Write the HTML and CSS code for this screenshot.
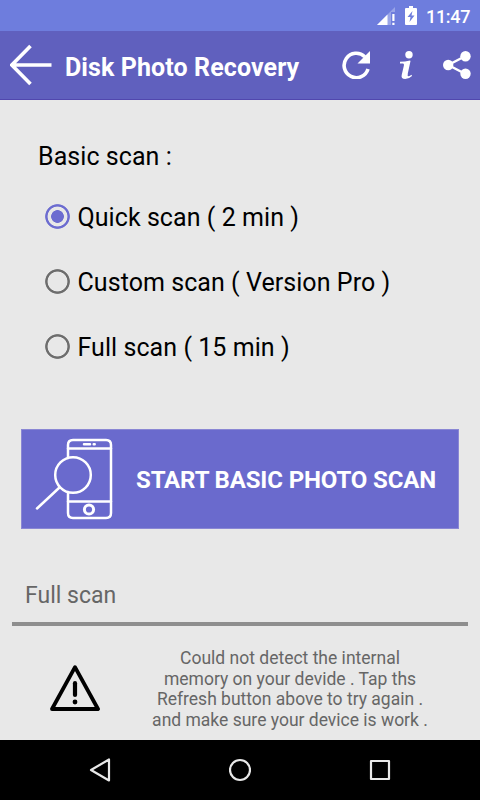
FILE: index.html
```
<!DOCTYPE html>
<html lang="en">
<head>
  <meta charset="UTF-8">
  <meta name="viewport" content="width=device-width, initial-scale=1.0">
  <title>Disk Photo Recovery</title>
  <link rel="stylesheet" href="styles.css">
</head>
<body>
  <div class="status-bar">
    <svg class="signal" width="18" height="18" viewBox="0 0 18 18">
      <path d="M0 18L18 0V5H14V18Z" fill="#fff" opacity=".3"/>
      <path d="M0 18L10.5 7.5V18Z" fill="#fff"/>
      <path d="M15.3 7H17.5V14H15.3ZM15.3 15.7H17.5V18H15.3Z" fill="#fff"/>
    </svg>
    <svg class="battery" width="12" height="19" viewBox="0 0 12 19">
      <path d="M4 0H8V2H11Q12 2 12 3V18Q12 19 11 19H1Q0 19 0 18V3Q0 2 1 2H4Z" fill="#fff"/>
      <path d="M7.5 5L2.5 11H5.5L4.5 16L9.5 9.5H6.5Z" fill="#6e7ddd"/>
    </svg>
    <span class="clock">11:47</span>
  </div>

  <header>
    <svg class="back" width="42" height="42" viewBox="0 0 42 42" fill="none" stroke="#fff" stroke-width="3.6">
      <path d="M41.5 21H2M20.5 2L1.8 21L20.5 40"/>
    </svg>
    <h1>Disk Photo Recovery</h1>
    <svg class="refresh" width="28" height="28" viewBox="0 0 28 28">
      <path d="M26 18A12.2 12.2 0 1 1 22.8 5.7" fill="none" stroke="#fff" stroke-width="3.6"/>
      <path d="M28 0V12.5H15.5Z" fill="#fff"/>
    </svg>
    <svg class="info" width="13" height="28" viewBox="0 0 13 28" fill="#fff">
      <circle cx="9" cy="3.7" r="3.7"/>
      <path d="M0 10.8Q5 10.5 10 9.4L10.5 10L7.8 22.5Q7.2 25.2 8.6 25.2Q9.8 25.2 11.6 23.8L12 25Q9 28 5.2 28Q0.8 28 1.7 24L3.9 14.4Q4.3 12.8 3 12.6L0 12.4Z"/>
    </svg>
    <svg class="share" width="28" height="28" viewBox="0 0 28 28" fill="#fff">
      <path d="M22.5 5L5.3 14L22.5 23" fill="none" stroke="#fff" stroke-width="2.4"/>
      <circle cx="5.2" cy="14" r="5.2"/>
      <circle cx="22.5" cy="5.2" r="5.2"/>
      <circle cx="22.5" cy="22.8" r="5.2"/>
    </svg>
  </header>

  <main>
    <h2>Basic scan :</h2>
    <div class="options">
      <label class="option"><input type="radio" name="scan" checked><span>Quick scan ( 2 min )</span></label>
      <label class="option"><input type="radio" name="scan"><span>Custom scan ( Version Pro )</span></label>
      <label class="option"><input type="radio" name="scan"><span>Full scan ( 15 min )</span></label>
    </div>

    <button class="start">
      <svg width="80" height="84" viewBox="0 0 80 84" fill="none" stroke="#fff" stroke-width="2.5" stroke-linecap="round">
        <path d="M33 21V8Q33 3 38 3H71Q76 3 76 8V76Q76 81 71 81H38Q33 81 33 76V55"/>
        <path d="M33 11.5H76M33 64.5H76"/>
        <path d="M49 7.2H55M58.7 7.2H59.7"/>
        <circle cx="54" cy="72.5" r="4.6" stroke-width="3"/>
        <circle cx="38" cy="38" r="17.8"/>
        <path d="M24.5 50.5L2 71.5"/>
      </svg>
      <span>START BASIC PHOTO SCAN</span>
    </button>

    <h3>Full scan</h3>
    <div class="warning">
      <svg width="50" height="47" viewBox="0 0 50 47" fill="none" stroke="#000" stroke-linejoin="round" stroke-linecap="round">
        <path d="M25 2.2L48 44H2Z" stroke-width="3.8"/>
        <path d="M25 18.2V30" stroke-width="4.2"/>
        <circle cx="25" cy="37" r="2.4" fill="#000" stroke="none"/>
      </svg>
      <p>Could not detect the internal<br>memory on your devide . Tap ths<br>Refresh button above to try again .<br>and make sure your device is work .</p>
    </div>
  </main>

  <nav>
    <svg width="22" height="24" viewBox="0 0 22 24"><path d="M20 1.5V22.5L2 12Z"/></svg>
    <svg width="22" height="24" viewBox="0 0 22 24"><circle cx="11" cy="12" r="10"/></svg>
    <svg width="22" height="24" viewBox="0 0 22 24"><rect x="2" y="3" width="18" height="18"/></svg>
  </nav>
</body>
</html>
```
FILE: styles.css
```
* {
  box-sizing: border-box;
}
body {
  font-family: Roboto, sans-serif;
  background-color: #e8e8e8;
  color: #000;
  margin: 0;
  height: 800px;
  display: flex;
  flex-direction: column;
  overflow: hidden;
}
svg {
  display: block;
  flex: none;
}
.status-bar {
  height: 31px;
  background-color: #6e7ddd;
  color: white;
  display: flex;
  align-items: center;
  justify-content: flex-end;
  padding: 0 10px 0 0;
}
.battery {
  margin: 0 9px 0 10px;
}
.signal {
  margin-top: 1px;
}
.clock {
  font-size: 18px;
  font-weight: 500;
  line-height: 20px;
  letter-spacing: -0.3px;
  width: 44px;
  margin-top: 2px;
  white-space: nowrap;
}
header {
  height: 69px;
  background-color: #6060be;
  border-bottom: 1px solid #5147ae;
  color: white;
  display: flex;
  align-items: center;
  padding: 0 9.5px 0 10px;
}
header h1 {
  flex: 1;
  font-size: 25px;
  font-weight: bold;
  line-height: 30px;
  letter-spacing: 0.1px;
  margin: 5px 0 0 13px;
  white-space: nowrap;
}
.info {
  margin: 0 30px 0 30px;
}
main {
  height: 640px;
  padding: 0 12px;
}
h2 {
  margin: 0;
  padding: 42px 0 0 26px;
  font-size: 25px;
  font-weight: normal;
  line-height: 30px;
  letter-spacing: 0.06px;
}
.options {
  padding: 12px 0 0 33px;
}
.option {
  height: 65px;
  display: flex;
  align-items: center;
  font-size: 25px;
  line-height: 30px;
  letter-spacing: 0.06px;
}
.option span {
  margin: 3px 0 0 7.5px;
}
.option input {
  appearance: none;
  width: 25px;
  height: 25px;
  margin: 0;
  background: radial-gradient(circle, transparent 9.5px, #6d6d6d 10.3px 11.9px, transparent 12.7px);
}
.option input:checked {
  background: radial-gradient(circle, #6c6cd0 6px, transparent 6.7px 9.5px, #6c6cd0 10.3px 11.9px, transparent 12.7px);
}
.start {
  width: 438px;
  height: 100px;
  margin: 50px 9px 0;
  padding: 0 0 0 13px;
  display: flex;
  align-items: center;
  gap: 21px;
  background-color: #6a6acd;
  border: 1px solid #8a87d4;
  color: white;
  font-family: inherit;
  font-size: 24px;
  font-weight: bold;
  line-height: 30px;
  letter-spacing: -0.14px;
  white-space: nowrap;
}
.start span {
  margin-top: 2px;
}
h3 {
  margin: 49px 0 0;
  padding: 3px 13px 0;
  height: 48px;
  border-bottom: 4px solid #8e8e8e;
  color: #666;
  font-size: 23px;
  font-weight: normal;
  line-height: 30px;
}
.warning {
  display: flex;
  padding: 22px 0 0 38px;
}
.warning svg {
  margin-top: 17px;
}
.warning p {
  width: 300px;
  margin: 0 0 0 40px;
  color: #666;
  font-size: 17.5px;
  line-height: 20.7px;
  text-align: center;
  white-space: nowrap;
}
nav {
  height: 60px;
  background-color: #000;
  display: flex;
  align-items: center;
  justify-content: center;
  gap: 118px;
}
nav svg {
  fill: none;
  stroke: #e8e8e8;
  stroke-width: 2.2;
  stroke-linejoin: round;
}
```
